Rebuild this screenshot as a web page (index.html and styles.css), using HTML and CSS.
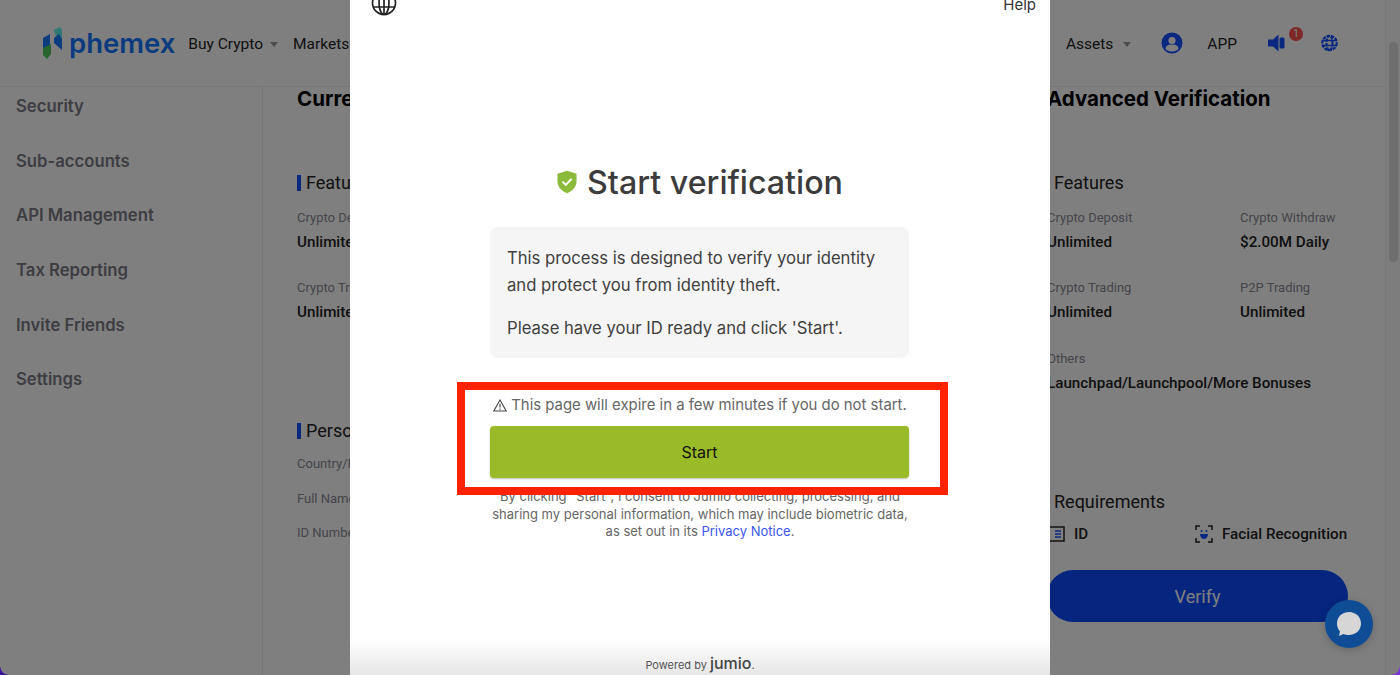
FILE: index.html
```html
<!DOCTYPE html>
<html>
<head>
	<title>Phemex - Start verification</title>
	<link rel="stylesheet" href="styles.css">
</head>
<body>
	<div id="page">
		<header id="topbar">
			<div class="nav-left">
				<a class="logo">
					<svg width="22" height="32" viewBox="0 0 22 32">
						<path d="M1 11 L8 7 L8 18 L4 24 L1 21 Z" fill="#1a78ff"/>
						<path d="M1 21 L9 17 L9 27 L5 32 L1 28 Z" fill="#4ecb5a"/>
						<path d="M12 3 L18 0 L20 3 L20 14 L14 10 Z" fill="#5ef0e8"/>
						<path d="M12 16 L12 11 L17 7 L20 12 L20 23 Z" fill="#1a78ff"/>
					</svg>
					<span class="logo-text">phemex</span>
				</a>
				<span class="nav-item">Buy Crypto<i class="caret"></i></span>
				<span class="nav-item">Markets</span>
			</div>
			<div class="nav-right">
				<span class="nav-item assets">Assets<i class="caret"></i></span>
				<svg class="user-icon" width="22" height="22" viewBox="0 0 22 22">
					<circle cx="11" cy="11" r="10.5" fill="#1450ff"/>
					<circle cx="11" cy="8.5" r="3.6" fill="#fff"/>
					<path d="M4.5 17 C5 13 8 12.6 11 12.6 C14 12.6 17 13 17.5 17 C15.5 19 13 19.6 11 19.6 C9 19.6 6.5 19 4.5 17 Z" fill="#fff"/>
				</svg>
				<span class="nav-item app">APP</span>
				<span class="notice">
					<svg width="17" height="18" viewBox="0 0 17 18">
						<path d="M0 5.5 H5 L10.5 0.5 V17.5 L5 12.5 H0 Z" fill="#1450ff"/>
						<rect x="11.5" y="3.5" width="5" height="11" rx="1.5" fill="#1450ff"/>
					</svg>
					<b class="badge">1</b>
				</span>
				<svg class="lang-icon" width="17" height="18" viewBox="0 0 17 18" fill="none" stroke="#1450ff" stroke-width="2.2" stroke-dasharray="3.4 1">
					<circle cx="8.5" cy="9" r="7.2"/>
					<ellipse cx="8.5" cy="9" rx="3" ry="7.2"/>
					<path d="M1 6.5 H16 M1 11.5 H16" stroke-dasharray="none" stroke-width="1.4"/>
				</svg>
			</div>
		</header>

		<div id="content">
			<aside id="sidebar">
				<a>Security</a>
				<a>Sub-accounts</a>
				<a>API Management</a>
				<a>Tax Reporting</a>
				<a>Invite Friends</a>
				<a>Settings</a>
			</aside>
			<main id="levels">
				<section class="level">
					<h2>Current Verification</h2>
					<h3 class="mark">Features</h3>
					<div class="specs">
						<div><p>Crypto Deposit</p><strong>Unlimited</strong></div>
						<div><p>Crypto Withdraw</p><strong>$2.00M Daily</strong></div>
						<div><p>Crypto Trading</p><strong>Unlimited</strong></div>
						<div><p>P2P Trading</p><strong>Unlimited</strong></div>
					</div>
					<h3 class="mark personal">Personal Information</h3>
					<ul class="info">
						<li>Country/Region</li>
						<li>Full Name</li>
						<li>ID Number</li>
					</ul>
				</section>
				<section class="level">
					<h2>Advanced Verification</h2>
					<h3 class="mark">Features</h3>
					<div class="specs">
						<div><p>Crypto Deposit</p><strong>Unlimited</strong></div>
						<div><p>Crypto Withdraw</p><strong>$2.00M Daily</strong></div>
						<div><p>Crypto Trading</p><strong>Unlimited</strong></div>
						<div><p>P2P Trading</p><strong>Unlimited</strong></div>
						<div class="wide"><p>Others</p><strong>Launchpad/Launchpool/More Bonuses</strong></div>
					</div>
					<h3 class="mark reqs">Requirements</h3>
					<div class="req-row">
						<span class="req">
							<svg width="18" height="16" viewBox="0 0 18 16" fill="none">
								<rect x="1" y="1" width="16" height="14" stroke="#222" stroke-width="1.5"/>
								<path d="M8 5 H14 M8 8 H14 M8 11 H14" stroke="#1450ff" stroke-width="1.6"/>
							</svg>
							ID
						</span>
						<span class="req">
							<svg width="18" height="18" viewBox="0 0 18 18" fill="none">
								<path d="M1 5 V1 H5 M13 1 H17 V5 M1 13 V17 H5 M13 17 H17 V13" stroke="#222" stroke-width="1.5"/>
								<path d="M5 9 H13 C13 12 11 14 9 14 C7 14 5 12 5 9 Z" fill="#1450ff"/>
								<circle cx="6.5" cy="6" r="1" fill="#1450ff"/>
								<circle cx="11.5" cy="6" r="1" fill="#1450ff"/>
							</svg>
							Facial Recognition
						</span>
					</div>
					<button class="verify">Verify</button>
				</section>
			</main>
		</div>
	</div>

	<div id="scrollbar"><div class="thumb"></div></div>
	<div id="dim"></div>

	<!-- jumio window on top of the dimmed page -->
	<div id="modal">
		<div class="modal-top">
			<svg width="26" height="26" viewBox="0 0 26 26" fill="none" stroke="#222" stroke-width="1.7">
				<circle cx="13" cy="13" r="11.5"/>
				<ellipse cx="13" cy="13" rx="5" ry="11.5"/>
				<path d="M13 1.5 V24.5 M2.5 9 H23.5 M2.5 17 H23.5"/>
			</svg>
			<span>Help</span>
		</div>
		<h1>
			<svg width="20" height="24" viewBox="0 0 22 26">
				<path d="M11 0.5 L21.5 4 V12 C21.5 18.5 17 23 11 25.5 C5 23 0.5 18.5 0.5 12 V4 Z" fill="#8cbb3c"/>
				<path d="M6 12.6 L9.7 16.2 L16 9.6" fill="none" stroke="#fff" stroke-width="2.2"/>
			</svg>
			Start verification
		</h1>
		<div class="intro">
			<p>This process is designed to verify your identity and protect you from identity theft.</p>
			<p>Please have your ID ready and click 'Start'.</p>
		</div>
		<p class="expire">
			<svg width="14" height="13" viewBox="0 0 14 13" fill="none" stroke="#444" stroke-width="1.1">
				<path d="M7 1 L13.2 12 H0.8 Z"/>
				<path d="M7 4.8 V8.6 M7 9.6 V10.8"/>
			</svg>
			This page will expire in a few minutes if you do not start.
		</p>
		<button class="start">Start</button>
		<p class="consent">By clicking "Start", I consent to Jumio collecting, processing, and sharing my personal information, which may include biometric data, as set out in its <a>Privacy Notice</a>.</p>
		<div class="powered">Powered by <b>jumio</b><span>.</span></div>
	</div>
	<div id="highlight"></div>

	<a id="chat">
		<svg width="28" height="28" viewBox="0 0 28 28">
			<path d="M14 2 C21 2 26 7 26 13.5 C26 20 21 25 14 25 C12 25 10 24.6 8.5 24 L4 26 L5 21.5 C3 19.4 2 16.6 2 13.5 C2 7 7 2 14 2 Z" fill="#d6d6d6"/>
		</svg>
	</a>
	<i class="corner left"></i>
	<i class="corner right"></i>
</body>
</html>
```

FILE: styles.css
```css
* {
	box-sizing: border-box;
}
html, body {
	height: 100%;
}
body {
	margin: 0;
	overflow: hidden;
	background: #fff;
	font-family: Roboto, "Liberation Sans", sans-serif;
	color: #1c1c1c;
}
h1, h2, h3, p, ul {
	margin: 0;
	padding: 0;
}

/* page behind the dim layer */
#page {
	height: 675px;
	overflow: hidden;
}
#topbar {
	height: 87px;
	display: flex;
	justify-content: space-between;
	align-items: center;
	padding: 0 62px 0 42px;
	border-bottom: 1px solid #f0f0f0;
}
.nav-left, .nav-right {
	display: flex;
	align-items: center;
}
.logo {
	display: flex;
	align-items: center;
	margin-right: 13px;
}
.logo-text {
	font-family: Inter, sans-serif;
	font-weight: 600;
	font-size: 27.5px;
	line-height: 32px;
	color: #1476ff;
	margin-left: 5px;
}
.nav-item {
	display: flex;
	align-items: center;
	padding-top: 2px;
	font-size: 15.5px;
	color: #222;
}
.caret {
	width: 0;
	height: 0;
	margin: 1px 0 0 7px;
	border-left: 4.5px solid transparent;
	border-right: 4.5px solid transparent;
	border-top: 5px solid #999;
}
.nav-left .caret {
	margin-right: 15px;
}
.assets .caret {
	margin-left: 10px;
}
.user-icon {
	margin-left: 30px;
}
.app {
	margin-left: 24px;
}
.notice {
	position: relative;
	display: flex;
	margin-left: 31px;
}
.badge {
	position: absolute;
	left: 21px;
	top: -7px;
	width: 14px;
	height: 14px;
	border-radius: 50%;
	background: #ff5050;
	color: #fff;
	font-size: 10px;
	font-weight: 400;
	line-height: 14px;
	text-align: center;
}
.lang-icon {
	margin-left: 36px;
}

#content {
	display: flex;
	height: 588px;
}
#sidebar {
	flex: 0 0 263px;
	height: 100%;
	border-right: 1px solid #ececec;
	display: flex;
	flex-direction: column;
}
#sidebar a {
	height: 54.7px;
	padding-left: 16px;
	line-height: 39.5px;
	font-family: Inter, sans-serif;
	font-weight: 600;
	font-size: 16.7px;
	color: #7b7b86;
}
#levels {
	flex: 1;
	display: flex;
	padding-left: 34px;
}
.level {
	flex: 0 0 750px;
}
.level:last-child {
	flex: 0 0 302px;
}
h2 {
	font-family: Inter, sans-serif;
	font-size: 20.5px;
	font-weight: 700;
	line-height: 24px;
	color: #000;
}
.mark {
	margin-top: 60px;
	padding-left: 9px;
	font-size: 18px;
	font-weight: 400;
	line-height: 24px;
	color: #222;
	position: relative;
}
.mark::before {
	content: "";
	position: absolute;
	left: 0;
	top: 4px;
	width: 4px;
	height: 16px;
	background: #1450ff;
}
.level:last-child .mark {
	padding-left: 7px;
}
.level:last-child .mark::before {
	left: -1px;
}
.specs {
	display: grid;
	grid-template-columns: 193px 1fr;
	row-gap: 27px;
	margin-top: 14px;
}
.specs p {
	font-size: 13px;
	line-height: 18px;
	color: #8a8a96;
	margin-bottom: 5px;
}
.specs strong {
	display: block;
	font-size: 15.2px;
	font-weight: 500;
	line-height: 20px;
	color: #222;
	white-space: nowrap;
}
.specs .wide {
	grid-column: span 2;
	padding-top: 1px;
}
.level:first-child .specs {
	grid-template-columns: 350px 1fr;
}
.mark.personal {
	margin-top: 97px;
}
.mark.reqs {
	margin-top: 97px;
}
.info {
	list-style: none;
	margin-top: 12px;
}
.info li {
	font-size: 13px;
	line-height: 18px;
	margin-bottom: 16.5px;
	color: #8a8a96;
}
.req-row {
	display: grid;
	grid-template-columns: 148px 1fr;
	margin-top: 10px;
}
.req {
	display: flex;
	align-items: center;
	gap: 9px;
	font-size: 15.2px;
	font-weight: 500;
	line-height: 20px;
	color: #222;
	white-space: nowrap;
}
.verify {
	display: block;
	width: 301px;
	height: 52px;
	margin-top: 26px;
	border: 0;
	border-radius: 26px;
	background: #0a4bff;
	color: #fff;
	font-family: Roboto, sans-serif;
	font-size: 18px;
}

#scrollbar {
	position: absolute;
	top: 0;
	right: 0;
	bottom: 0;
	width: 15px;
	background: #fafafa;
	border-left: 1px solid #f0f0f0;
}
.thumb {
	width: 9px;
	height: 220px;
	margin: 42px 0 0 3px;
	border-radius: 5px;
	background: #dcdcdc;
}
#dim {
	position: absolute;
	inset: 0;
	background: rgba(0,0,0,.5);
}

/* modal */
#modal {
	position: absolute;
	left: 350px;
	top: 0;
	width: 700px;
	height: 675px;
	background: #fff;
	display: flex;
	flex-direction: column;
	align-items: center;
	overflow: hidden;
}
.modal-top {
	width: 100%;
	height: 16px;
	margin-bottom: 149px;
	padding: 0 14px 0 21px;
	display: flex;
	justify-content: space-between;
	align-items: flex-start;
	font-family: Inter, sans-serif;
	font-size: 15px;
	color: #333;
}
.modal-top svg {
	margin-top: -10px;
}
.modal-top span {
	margin-top: -5px;
}
#modal h1 {
	display: flex;
	align-items: center;
	gap: 10px;
	height: 34px;
	font-family: Inter, sans-serif;
	font-size: 32.2px;
	font-weight: 500;
	color: #3c3c3c;
	white-space: nowrap;
}
.intro {
	width: 419px;
	height: 131px;
	margin: 28px 1px 0 0;
	padding: 18px 17px;
	background: #f5f5f5;
	border-radius: 8px;
	font-family: Inter, sans-serif;
	font-size: 16.65px;
	line-height: 27px;
	color: #3f3f3f;
}
.intro p + p {
	margin-top: 16px;
}
.expire {
	margin-top: 37px;
	height: 20px;
	display: flex;
	align-items: center;
	gap: 4px;
	font-family: Inter, sans-serif;
	font-size: 14.9px;
	color: #666;
	white-space: nowrap;
}
.start {
	width: 419px;
	height: 52px;
	margin: 11px 1px 0 0;
	border: 0;
	border-radius: 4px;
	background: #9abb28;
	box-shadow: 0 1px 2px rgba(0,0,0,.25);
	font-family: Inter, sans-serif;
	font-size: 16px;
	color: #111;
}
.consent {
	width: 420px;
	margin-top: 10px;
	text-align: center;
	font-family: Inter, sans-serif;
	font-size: 13px;
	line-height: 17.5px;
	color: #666;
}
.consent a {
	color: #3a56ee;
}
.powered {
	position: absolute;
	left: 0;
	right: 0;
	bottom: 0;
	height: 35px;
	padding-top: 13px;
	display: flex;
	justify-content: center;
	align-items: baseline;
	gap: 3px;
	background: linear-gradient(#fff, #e6e6e6);
	font-family: Inter, sans-serif;
	font-size: 11px;
	color: #555;
}
.powered b {
	font-size: 16px;
	font-weight: 500;
	color: #444;
}
.powered span {
	margin-left: -3px;
}
#highlight {
	position: absolute;
	left: 457px;
	top: 382px;
	width: 491px;
	height: 113px;
	border: 8px solid #ff2200;
}
#chat {
	position: absolute;
	left: 1325px;
	top: 600px;
	width: 48px;
	height: 48px;
	border-radius: 50%;
	background: #0f4c96;
	box-shadow: 0 2px 8px rgba(0,0,0,.2);
	display: flex;
	align-items: center;
	justify-content: center;
}
.corner {
	position: absolute;
	bottom: 0;
	width: 8px;
	height: 8px;
}
.corner.left {
	left: 0;
	background: radial-gradient(circle at 100% 0, transparent 7px, #3a10a0 8px);
}
.corner.right {
	right: 0;
	background: radial-gradient(circle at 0 0, transparent 7px, #7a30e0 8px);
}
```
